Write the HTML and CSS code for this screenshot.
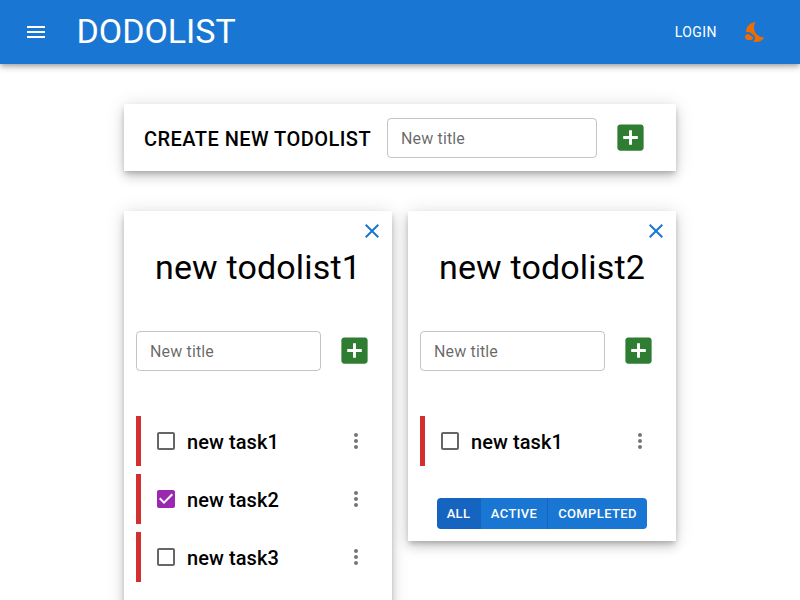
FILE: index.html
```html
<!DOCTYPE html>
<html lang="en">
<head>
<meta charset="utf-8">
<title>Dodolist</title>
<link rel="stylesheet" href="styles.css">
</head>
<body>
<svg class="defs" aria-hidden="true">
  <symbol id="add" viewBox="0 0 24 24"><path d="M19 3H5c-1.11 0-2 .9-2 2v14c0 1.1.89 2 2 2h14c1.1 0 2-.9 2-2V5c0-1.1-.9-2-2-2zm-2 10h-4v4h-2v-4H7v-2h4V7h2v4h4v2z"/></symbol>
  <symbol id="close" viewBox="0 0 24 24"><path d="M19 6.41 17.59 5 12 10.59 6.41 5 5 6.41 10.59 12 5 17.59 6.41 19 12 13.41 17.59 19 19 17.59 13.41 12z"/></symbol>
  <symbol id="more" viewBox="0 0 24 24"><path d="M12 8c1.1 0 2-.9 2-2s-.9-2-2-2-2 .9-2 2 .9 2 2 2zm0 2c-1.1 0-2 .9-2 2s.9 2 2 2 2-.9 2-2-.9-2-2-2zm0 6c-1.1 0-2 .9-2 2s.9 2 2 2 2-.9 2-2-.9-2-2-2z"/></symbol>
  <symbol id="unchecked" viewBox="0 0 24 24"><path d="M19 5v14H5V5h14m0-2H5c-1.1 0-2 .9-2 2v14c0 1.1.9 2 2 2h14c1.1 0 2-.9 2-2V5c0-1.1-.9-2-2-2z"/></symbol>
  <symbol id="checked" viewBox="0 0 24 24"><path d="M19 3H5c-1.11 0-2 .9-2 2v14c0 1.1.89 2 2 2h14c1.11 0 2-.9 2-2V5c0-1.1-.89-2-2-2zm-9 14l-5-5 1.41-1.41L10 14.17l7.59-7.59L19 8l-9 9z"/></symbol>
</svg>
<header class="bar">
  <button class="icon-btn menu"><svg class="icon" viewBox="0 0 24 24"><path d="M3 18h18v-2H3v2zm0-5h18v-2H3v2zm0-7v2h18V6H3z"/></svg></button>
  <div class="brand">DODOLIST</div>
  <button class="login">LOGIN</button>
  <button class="icon-btn night"><svg class="icon" viewBox="0 0 24 24"><path d="M11.1 12.08c-2.33-4.51-.5-8.48.53-10.07C6.27 2.2 1.98 6.59 1.98 12c0 .14.02.28.02.42.62-.27 1.29-.42 2-.42 1.66 0 3.18.83 4.1 2.15C9.77 14.63 11 16.17 11 18c0 1.52-.87 2.83-2.12 3.51.98.32 2.03.5 3.11.5 3.5 0 6.58-1.8 8.37-4.52-2.36.23-6.98-.97-9.26-5.41z"/><path d="M7 16h-.18C6.4 14.84 5.3 14 4 14c-1.66 0-3 1.34-3 3s1.34 3 3 3h3c1.1 0 2-.9 2-2s-.9-2-2-2z"/></svg></button>
</header>
<main class="content">
  <section class="paper create">
    <h6 class="create-title">CREATE NEW TODOLIST</h6>
    <input class="field" placeholder="New title">
    <button class="icon-btn add"><svg class="icon"><use href="#add"/></svg></button>
  </section>
  <div class="lists">
    <section class="paper list">
      <div class="list-top"><button class="icon-btn close"><svg class="icon"><use href="#close"/></svg></button></div>
      <h4 class="list-title">new todolist1</h4>
      <div class="add-row">
        <input class="field" placeholder="New title">
        <button class="icon-btn add"><svg class="icon"><use href="#add"/></svg></button>
      </div>
      <div class="tasks">
        <div class="task"><svg class="icon box"><use href="#unchecked"/></svg><span class="name">new task1</span><svg class="icon more"><use href="#more"/></svg></div>
        <div class="task"><svg class="icon box on"><use href="#checked"/></svg><span class="name">new task2</span><svg class="icon more"><use href="#more"/></svg></div>
        <div class="task"><svg class="icon box"><use href="#unchecked"/></svg><span class="name">new task3</span><svg class="icon more"><use href="#more"/></svg></div>
      </div>
    </section>
    <section class="paper list">
      <div class="list-top"><button class="icon-btn close"><svg class="icon"><use href="#close"/></svg></button></div>
      <h4 class="list-title">new todolist2</h4>
      <div class="add-row">
        <input class="field" placeholder="New title">
        <button class="icon-btn add"><svg class="icon"><use href="#add"/></svg></button>
      </div>
      <div class="tasks">
        <div class="task"><svg class="icon box"><use href="#unchecked"/></svg><span class="name">new task1</span><svg class="icon more"><use href="#more"/></svg></div>
      </div>
      <div class="filters"><button class="filter active">ALL</button><button class="filter">ACTIVE</button><button class="filter">COMPLETED</button></div>
    </section>
  </div>
</main>
</body>
</html>
```
FILE: styles.css
```css
* { box-sizing: border-box; }
html { height: 100%; overflow: hidden; }
body {
  margin: 0;
  height: 100%;
  overflow: hidden;
  background: #fff;
  color: #000;
  font: 400 16px/1.5 Roboto, Arial, sans-serif;
}
button { border: 0; padding: 0; background: none; font: inherit; color: inherit; }
h4, h6 { margin: 0; }
.defs { display: none; }
.icon { display: block; width: 24px; height: 24px; fill: currentColor; flex: none; }
.icon-btn { display: flex; padding: 8px; flex: none; }

.bar {
  display: flex;
  align-items: center;
  height: 64px;
  padding: 0 24px;
  background: #1976d2;
  color: #fff;
  box-shadow: 0 2px 4px -1px rgba(0,0,0,.2), 0 4px 5px 0 rgba(0,0,0,.14), 0 1px 10px 0 rgba(0,0,0,.12);
}
.menu { margin-left: -8px; }
.brand {
  flex: 1;
  margin-left: 20.5px;
  font-size: 34px;
  line-height: 1.235;
  letter-spacing: -.03px;
}
.login {
  padding: 6px 8px;
  font-size: 14px;
  font-weight: 400;
  line-height: 1.75;
  letter-spacing: .45px;
}
.night { margin: 0 0 0 11px; color: #ef6c00; }

.content { width: 552px; margin: 40px auto 0; }
.paper {
  background: #fff;
  box-shadow: 0 3px 5px -1px rgba(0,0,0,.2), 0 6px 10px 0 rgba(0,0,0,.14), 0 1px 18px 0 rgba(0,0,0,.12);
}
.create { display: flex; align-items: center; height: 67px; padding: 8px 20px; }
.create-title {
  flex: 1;
  padding-top: 2px;
  font-size: 20px;
  font-weight: 500;
  line-height: 1.6;
  letter-spacing: .46px;
  white-space: nowrap;
}
.field {
  width: 210px;
  height: 40px;
  margin-right: 8px;
  padding: 9.5px 13px 7.5px;
  border: 1px solid rgba(0,0,0,.23);
  border-radius: 4px;
  background: transparent;
  font: 400 16px/23px Roboto, Arial, sans-serif;
  letter-spacing: .00938em;
}
.field::placeholder { color: rgba(0,0,0,.6); opacity: 1; }
.add { color: #2e7d32; }
.add .icon { width: 35px; height: 35px; }

.lists { display: flex; align-items: flex-start; gap: 16px; margin-top: 40px; }
.list { width: 268px; min-height: 330px; padding: 0 12px 12px; }
.list:first-child { min-height: 446px; }
.list-top { display: flex; justify-content: flex-end; height: 35px; margin-right: -12px; }
.close { color: #1976d2; }
.list-title {
  margin-bottom: 43px;
  text-align: center;
  font-size: 34px;
  font-weight: 400;
  line-height: 42px;
  letter-spacing: .17px;
}
.add-row { display: flex; align-items: center; height: 39px; }
.add-row .field { width: 185px; margin-top: 1px; padding: 9px 13px 8px; }
.tasks { display: grid; gap: 8px; margin-top: 46px; }
.task { display: flex; align-items: center; height: 50px; padding-left: 13px; border-left: 5px solid #d32f2f; }
.box { color: rgba(0,0,0,.6); }
.box.on { color: #9c27b0; }
.name {
  flex: 1;
  margin-left: 9px;
  padding-top: 2px;
  font-size: 20px;
  font-weight: 500;
  line-height: 32px;
  letter-spacing: .08px;
}
.more { margin-right: 12px; color: rgba(0,0,0,.54); }
.filters { display: flex; width: 210px; margin: 32px auto 0; border-radius: 4px; overflow: hidden; }
.filter {
  flex: 1 1 auto;
  height: 31px;
  padding: 5px 0 3px;
  background: #1976d2;
  color: #fff;
  font-size: 13px;
  font-weight: 500;
  line-height: 22.75px;
  letter-spacing: .36px;
}
.filter:nth-child(1) { flex: 0 0 44px; }
.filter:nth-child(2) { flex: 0 0 67px; }
.filter:not(:last-child) { border-right: 1px solid #1565c0; }
.filter.active { background: #1565c0; }
```
